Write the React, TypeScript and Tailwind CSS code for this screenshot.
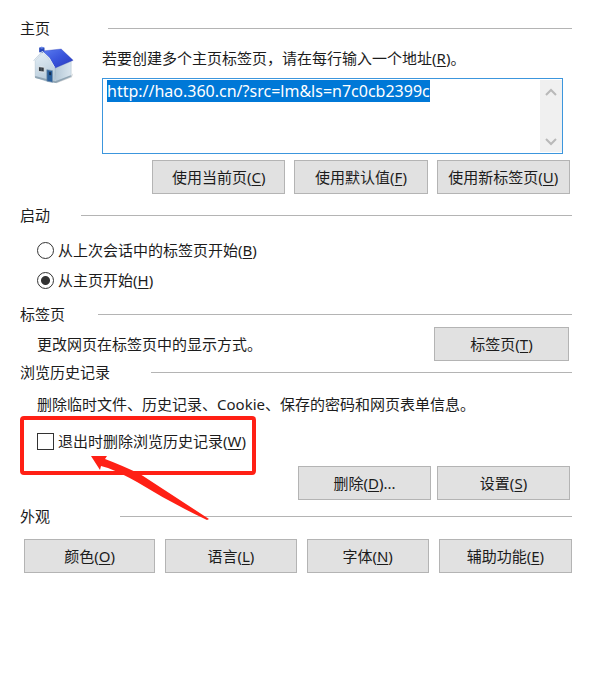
import React, { useEffect, useRef } from 'react';
import { clsx } from 'clsx';

const HOME_URL = 'http://hao.360.cn/?src=lm&ls=n7c0cb2399c';

interface HotkeyProps {
  text: string;
  hotkey: string;
  suffix?: string;
}

const Hotkey: React.FC<HotkeyProps> = ({ text, hotkey, suffix }) => (
  <span>
    {text}(<span className="underline underline-offset-2">{hotkey}</span>){suffix}
  </span>
);

const PushButton: React.FC<HotkeyProps & { className?: string }> = ({ className, ...label }) => (
  <button
    type="button"
    className={clsx(
      'h-[34px] border border-[#b4b4b4] bg-[#e1e1e1] whitespace-nowrap hover:border-[#0078d7] hover:bg-[#e5f1fb]',
      className,
    )}
  >
    <Hotkey {...label} />
  </button>
);

const GroupHeading: React.FC<{ title: string; className: string }> = ({ title, className }) => (
  <div className="flex h-5 items-center">
    <h2 className={clsx('shrink-0', className)}>{title}</h2>
    <div className="h-px flex-1 bg-[#b4b4b4]" />
  </div>
);

const HouseIcon: React.FC = () => (
  <svg viewBox="40 30 122 114" className="h-[38px] w-[41px] shrink-0" aria-hidden="true">
    <defs>
      <linearGradient id="roof" x1="0" y1="0" x2="1" y2="1">
        <stop offset="0" stopColor="#5b7df0" />
        <stop offset="0.5" stopColor="#3a55dc" />
        <stop offset="1" stopColor="#2838bc" />
      </linearGradient>
      <linearGradient id="wall" x1="0" y1="0" x2="0.3" y2="1">
        <stop offset="0" stopColor="#e6f0f7" />
        <stop offset="1" stopColor="#b8ccdb" />
      </linearGradient>
      <linearGradient id="side" x1="0" y1="0" x2="1" y2="0">
        <stop offset="0" stopColor="#b3c7d6" />
        <stop offset="1" stopColor="#d9e5ee" />
      </linearGradient>
    </defs>
    <path d="M104 139 152 122 160 112 156 124 110 142Z" fill="#c9cdd1" />
    <path d="M104 92 154 74V120L108 139Z" fill="url(#side)" stroke="#91a7b7" />
    <path d="M46 74 70 48 106 92V139L84 137 46 124Z" fill="url(#wall)" stroke="#93a8b8" />
    <path d="M46 120 106 136 153 118V122L107 141 46 126Z" fill="#8fa4b3" />
    <path d="M58 35 66 32 74 35V50L58 49Z" fill="#2848b8" />
    <path d="M58 35 66 32 74 35 66 38Z" fill="#6d8bea" />
    <path d="M68 45 124 39 160 73 106 96 90 66Z" fill="url(#roof)" stroke="#2c3db2" />
    <path d="M42 73 67 46 87 65 105 95" fill="none" stroke="#dce9f3" strokeWidth="3" />
    <path d="M41 75 67 48" fill="none" stroke="#8aa1b6" strokeWidth="1" />
    <path d="M56 92 73 94V108L56 106Z" fill="#343c44" stroke="#f4f8fa" strokeWidth="2" />
    <path d="M64 93V107" stroke="#8e9aa4" strokeWidth="1" />
    <path d="M81 101 98 104V139L81 135Z" fill="#295f9c" stroke="#7893aa" strokeWidth="2" />
    <path d="M88 108 94 109V118L88 117Z" fill="#142f50" />
  </svg>
);

const Chevron: React.FC<{ d: string }> = ({ d }) => (
  <svg viewBox="0 0 12 8" className="h-2 w-3" fill="none" stroke="#b9b9b9" strokeWidth="2" aria-hidden="true">
    <path d={d} />
  </svg>
);

const HomePages: React.FC = () => {
  const ref = useRef<HTMLTextAreaElement>(null);

  useEffect(() => {
    ref.current?.focus();
    ref.current?.select();
  }, []);

  return (
    <div className="mr-[9px] flex h-[76px] border border-[#3c96dd]">
      <textarea
        id="home-pages"
        ref={ref}
        defaultValue={HOME_URL}
        spellCheck={false}
        className="min-w-0 flex-1 resize-none overflow-hidden px-1 py-0.5 text-[16px] leading-5 outline-none selection:bg-[#0078d7] selection:text-white"
      />
      <div className="my-px flex w-[22px] flex-col justify-between bg-[#f0f0f0]">
        <button type="button" aria-label="向上滚动" className="flex h-6 items-center justify-center">
          <Chevron d="M1 7 6 2 11 7" />
        </button>
        <button type="button" aria-label="向下滚动" className="flex h-5 items-center justify-center">
          <Chevron d="M1 1 6 6 11 1" />
        </button>
      </div>
    </div>
  );
};

const startOptions = [
  { id: 'start-session', text: '从上次会话中的标签页开始', hotkey: 'B', checked: false },
  { id: 'start-home', text: '从主页开始', hotkey: 'H', checked: true },
];

export default function App() {
  return (
    <main className="min-h-screen bg-white pt-[18px] pr-7 pb-6 pl-5 font-['Noto_Sans','Noto_Sans_CJK_SC',sans-serif] text-[15px] leading-5 text-[#1c1c1c]">
      <section>
        <GroupHeading title="主页" className="w-[88px]" />
        <div className="mt-2 flex">
          <div className="w-[82px] shrink-0 pl-[13px]">
            <HouseIcon />
          </div>
          <div className="min-w-0 flex-1 pt-0.5">
            <label htmlFor="home-pages" className="mb-2.5 block">
              <Hotkey text="若要创建多个主页标签页，请在每行输入一个地址" hotkey="R" suffix="。" />
            </label>
            <HomePages />
          </div>
        </div>
        <div className="mt-1.5 mr-0.5 ml-[132px] flex gap-[9px]">
          <PushButton text="使用当前页" hotkey="C" className="flex-1" />
          <PushButton text="使用默认值" hotkey="F" className="flex-1" />
          <PushButton text="使用新标签页" hotkey="U" className="flex-1" />
        </div>
      </section>

      <section className="mt-[11px]">
        <GroupHeading title="启动" className="w-[61px]" />
        <div className="mt-[15px] ml-[17px] flex flex-col gap-2.5">
          {startOptions.map(({ id, text, hotkey, checked }) => (
            <div key={id} className="flex items-center gap-1">
              <input
                id={id}
                type="radio"
                name="start"
                defaultChecked={checked}
                className="size-[17px] appearance-none rounded-full border border-[#333] bg-white checked:bg-[radial-gradient(circle,#333_4px,#fff_5px)]"
              />
              <label htmlFor={id}>
                <Hotkey text={text} hotkey={hotkey} />
              </label>
            </div>
          ))}
        </div>
      </section>

      <section className="mt-[14px]">
        <GroupHeading title="标签页" className="w-[78px]" />
        <div className="mt-[3px] mr-[3px] ml-[17px] flex items-center justify-between">
          <p>更改网页在标签页中的显示方式。</p>
          <PushButton text="标签页" hotkey="T" className="w-[135px]" />
        </div>
      </section>

      <section className="mt-px">
        <GroupHeading title="浏览历史记录" className="w-[131px]" />
        <p className="mt-3 ml-[17px]">删除临时文件、历史记录、Cookie、保存的密码和网页表单信息。</p>
        <div className="relative mt-[17px] flex w-fit items-center gap-1 pl-[17px]">
          <input
            id="delete-on-exit"
            type="checkbox"
            className="size-[17px] appearance-none border border-[#333] bg-white checked:bg-[#333]"
          />
          <label htmlFor="delete-on-exit">
            <Hotkey text="退出时删除浏览历史记录" hotkey="W" />
          </label>
          {/* highlight frame and arrow over the option */}
          <div className="pointer-events-none absolute -top-[15px] left-0 h-[59px] w-[236px] rounded-[4px] border-4 border-[#ff2015]" />
          <svg
            viewBox="0 0 120 66"
            className="pointer-events-none absolute top-6 left-[71px] h-[66px] w-[120px]"
            fill="#ff2015"
            aria-hidden="true"
          >
            <path d="M0 1 16 1 14 4Q30 10 49 19L118 64 116 65Q80 48 46 27Q30 18 17 13L10 11 9 15Z" />
          </svg>
        </div>
        <div className="mt-[15px] mr-0.5 flex justify-end gap-1.5">
          <PushButton text="删除" hotkey="D" suffix="..." className="w-[133px]" />
          <PushButton text="设置" hotkey="S" className="w-[133px]" />
        </div>
      </section>

      <section className="mt-1.5">
        <GroupHeading title="外观" className="w-[100px]" />
        <div className="mt-[13px] ml-1 grid grid-cols-[131fr_131fr_122fr_133fr] gap-2.5">
          <PushButton text="颜色" hotkey="O" />
          <PushButton text="语言" hotkey="L" />
          <PushButton text="字体" hotkey="N" />
          <PushButton text="辅助功能" hotkey="E" />
        </div>
      </section>
    </main>
  );
}
